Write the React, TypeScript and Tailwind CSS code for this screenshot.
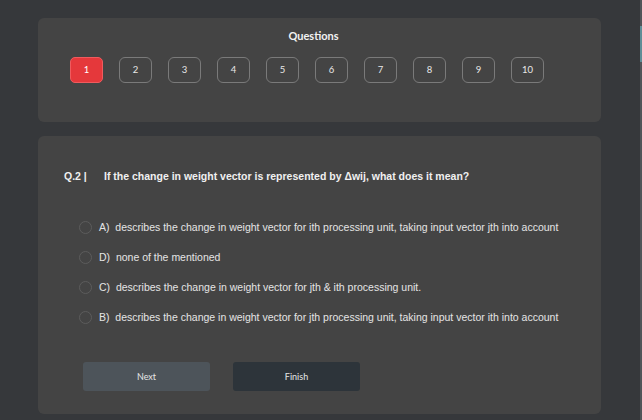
import { useState } from 'react'

const options = [
  'A)  describes the change in weight vector for ith processing unit, taking input vector jth into account',
  'D)  none of the mentioned',
  'C)  describes the change in weight vector for jth & ith processing unit.',
  'B)  describes the change in weight vector for jth processing unit, taking input vector ith into account',
]

export default function App() {
  const [current, setCurrent] = useState(1)
  const [picked, setPicked] = useState<number | null>(null)

  return (
    <div className="flex w-[642px] h-[420px] bg-[#36383b] overflow-hidden">
      <div className="flex-1 flex flex-col gap-[14px] pl-[38px] pr-[39px] pt-[18px]">
        {/* question picker */}
        <div className="h-[104px] rounded-md bg-[#444444] flex flex-col">
          <h2 className="pt-[11px] text-center text-[11px] leading-[14px] font-bold text-[#f2f2f2] font-['Lato',sans-serif] pr-[12px]">
            Questions
          </h2>
          <div className="mt-[14px] pl-[32px] flex gap-[16px]">
            {Array.from({ length: 10 }, (_, i) => i + 1).map(n => (
              <button
                key={n}
                onClick={() => setCurrent(n)}
                className={
                  n === current
                    ? 'w-[33px] h-[26px] rounded-[5px] bg-[#e5383b] border border-[#ef5b5e] text-white text-[9.5px] font-["Lato",sans-serif]'
                    : 'w-[33px] h-[26px] rounded-[6px] border border-[#7a7a7a] text-[#e8e8e8] text-[9.5px] font-["Lato",sans-serif]'
                }
              >
                {n}
              </button>
            ))}
          </div>
        </div>

        {/* question body */}
        <div className="h-[278px] rounded-md bg-[#444444] flex flex-col font-['Liberation_Sans',Arial,sans-serif]">
          <div className="flex items-center pt-[33px] pl-[26px] text-[10.5px] leading-[14px] font-bold text-[#f0f0f0]">
            <span className="w-[40px]">Q.2 |</span>
            <span>If the change in weight vector is represented by Δwij, what does it mean?</span>
          </div>

          <div className="mt-[37px] pl-[41px] flex flex-col gap-[16px]">
            {options.map((o, i) => (
              <label key={i} className="flex items-center h-[14px] cursor-pointer" onClick={() => setPicked(i)}>
                <span className="w-[13px] h-[13px] rounded-full border border-[#5c5c5c] flex items-center justify-center">
                  {picked === i && <span className="w-[7px] h-[7px] rounded-full bg-[#d0d0d0]" />}
                </span>
                <span className="ml-[7px] text-[10.5px] leading-[14px] text-[#e4e4e4] whitespace-pre">{o}</span>
              </label>
            ))}
          </div>

          <div className="mt-[38px] pl-[45px] flex gap-[23px] font-['Lato',sans-serif] text-[9px]">
            <button className="w-[127px] h-[29px] rounded-[3px] bg-[#4d545a] text-[#e6e6e6]">Next</button>
            <button className="w-[127px] h-[29px] rounded-[3px] bg-[#2d343a] text-[#e6e6e6]">Finish</button>
          </div>
        </div>
      </div>
      <div className="w-[2px] flex flex-col bg-[#505458]">
        <div className="h-[26px]" />
        <div className="h-[36px] bg-[#5f8d96]" />
      </div>
    </div>
  )
}
